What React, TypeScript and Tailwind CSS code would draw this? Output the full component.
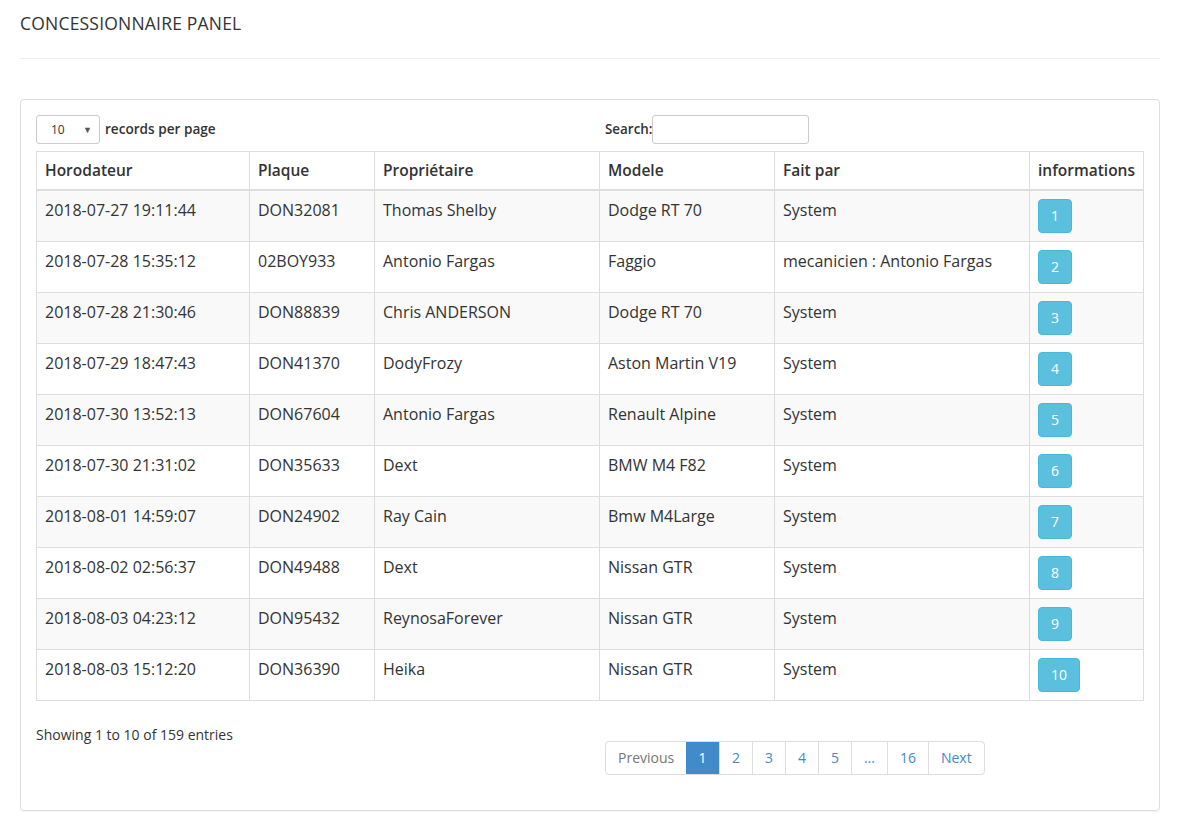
import React from 'react'

interface Entry {
  date: string
  plate: string
  owner: string
  model: string
  by: string
}

const rows: Entry[] = [
  { date: '2018-07-27 19:11:44', plate: 'DON32081', owner: 'Thomas Shelby', model: 'Dodge RT 70', by: 'System' },
  { date: '2018-07-28 15:35:12', plate: '02BOY933', owner: 'Antonio Fargas', model: 'Faggio', by: 'mecanicien : Antonio Fargas' },
  { date: '2018-07-28 21:30:46', plate: 'DON88839', owner: 'Chris ANDERSON', model: 'Dodge RT 70', by: 'System' },
  { date: '2018-07-29 18:47:43', plate: 'DON41370', owner: 'DodyFrozy', model: 'Aston Martin V19', by: 'System' },
  { date: '2018-07-30 13:52:13', plate: 'DON67604', owner: 'Antonio Fargas', model: 'Renault Alpine', by: 'System' },
  { date: '2018-07-30 21:31:02', plate: 'DON35633', owner: 'Dext', model: 'BMW M4 F82', by: 'System' },
  { date: '2018-08-01 14:59:07', plate: 'DON24902', owner: 'Ray Cain', model: 'Bmw M4Large', by: 'System' },
  { date: '2018-08-02 02:56:37', plate: 'DON49488', owner: 'Dext', model: 'Nissan GTR', by: 'System' },
  { date: '2018-08-03 04:23:12', plate: 'DON95432', owner: 'ReynosaForever', model: 'Nissan GTR', by: 'System' },
  { date: '2018-08-03 15:12:20', plate: 'DON36390', owner: 'Heika', model: 'Nissan GTR', by: 'System' },
]

const pages = ['1', '2', '3', '4', '5', '…', '16']

export default function App() {
  return (
    <div className="min-h-screen bg-white text-[#333] font-['Open_Sans',sans-serif]">
      <div className="ml-[20px] w-[1140px]">
        {/* Header */}
        <div className="pt-[12px] pb-[23px] border-b border-[#eee]">
          <h1 className="text-[17.5px] leading-[23px] font-medium tracking-[0.2px] text-[#333]">CONCESSIONNAIRE PANEL</h1>
        </div>

        {/* Panel */}
        <div className="mt-[40px] border border-[#ddd] rounded-[4px] px-[15px] pt-[15px] pb-[15px] shadow-[0_1px_1px_rgba(0,0,0,0.05)]">
          <div className="grid grid-cols-2">
            <div className="flex items-center gap-[5px]">
              <div className="w-[64px] h-[29px] border border-[#ccc] rounded-[3px] flex items-center justify-between pl-[14px] pr-[7px] text-[12px] text-[#333]">
                <span>10</span>
                <span className="text-[9px] text-[#555]">▼</span>
              </div>
              <span className="text-[13.6px] font-semibold">records per page</span>
            </div>
            <div className="flex items-center pl-[15px]">
              <span className="text-[13.4px] font-semibold">Search:</span>
              <div className="w-[157px] h-[29px] border border-[#ccc] rounded-[3px]" />
            </div>
          </div>

          <table className="mt-[7px] w-[1107px] table-fixed border-collapse border border-[#ddd] text-[16px] leading-[21px]">
            <colgroup>
              <col className="w-[213px]" />
              <col className="w-[125px]" />
              <col className="w-[225px]" />
              <col className="w-[175px]" />
              <col className="w-[255px]" />
              <col className="w-[114px]" />
            </colgroup>
            <thead>
              <tr className="border-b-2 border-[#ddd]">
                {['Horodateur', 'Plaque', 'Propriétaire', 'Modele', 'Fait par', 'informations'].map((h) => (
                  <th key={h} className="border border-[#ddd] border-b-2 px-[8px] py-[8px] text-left font-semibold text-[15.5px]">
                    {h}
                  </th>
                ))}
              </tr>
            </thead>
            <tbody>
              {rows.map((r, i) => (
                <tr key={i} className={i % 2 === 0 ? 'bg-[#f9f9f9]' : 'bg-white'}>
                  <td className="border border-[#ddd] px-[8px] pt-[9px] pb-[7px] align-top">{r.date}</td>
                  <td className="border border-[#ddd] px-[8px] pt-[9px] pb-[7px] align-top">{r.plate}</td>
                  <td className="border border-[#ddd] px-[8px] pt-[9px] pb-[7px] align-top">{r.owner}</td>
                  <td className="border border-[#ddd] px-[8px] pt-[9px] pb-[7px] align-top">{r.model}</td>
                  <td className="border border-[#ddd] px-[8px] pt-[9px] pb-[7px] align-top">{r.by}</td>
                  <td className="border border-[#ddd] p-[8px] align-top">
                    <button className="h-[34px] px-[12px] bg-[#5bc0de] border border-[#46b8da] rounded-[4px] text-white text-[14px] leading-[20px]">
                      {i + 1}
                    </button>
                  </td>
                </tr>
              ))}
            </tbody>
          </table>

          {/* Footer */}
          <div className="grid grid-cols-2 mt-[20px]">
            <div className="pt-[4px] text-[14px] leading-[19px]">Showing 1 to 10 of 159 entries</div>
            <div className="pl-[15px] pt-[20px] pb-[20px]">
              <div className="inline-flex border border-[#ddd] rounded-[4px] text-[14px] leading-[20px] overflow-hidden">
                <span className="px-[12px] py-[6px] text-[#777] w-[80px] text-center">Previous</span>
                {pages.map((p) => (
                  <span
                    key={p}
                    className={
                      p === '1'
                        ? 'py-[6px] px-[12px] min-w-[33px] text-center bg-[#428bca] text-white'
                        : 'py-[6px] px-[12px] min-w-[33px] text-center border-l border-[#ddd] text-[#428bca]'
                    }
                  >
                    {p}
                  </span>
                ))}
                <span className="px-[12px] py-[6px] border-l border-[#ddd] text-[#428bca]">Next</span>
              </div>
            </div>
          </div>
        </div>
      </div>
    </div>
  )
}
